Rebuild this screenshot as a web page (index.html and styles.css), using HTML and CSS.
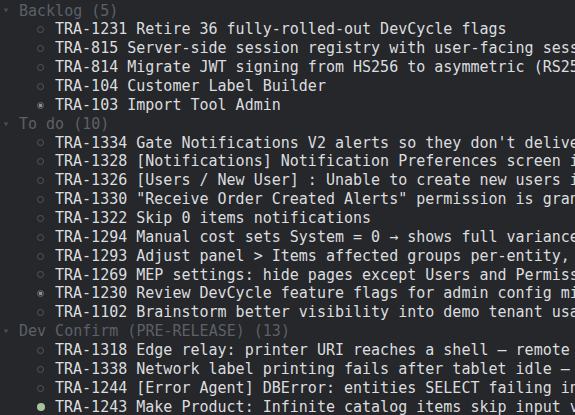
FILE: index.html
```html
<!DOCTYPE html>
<html>
<head>
<meta charset="utf-8">
<link rel="stylesheet" href="styles.css">
</head>
<body>
<div class="list">
  <div class="group">
    <div class="head"><span class="caret"><svg width="6" height="5" viewBox="0 0 6 5"><path d="M0.5 0.5h5L3 4.2z"/></svg></span><span class="label">Backlog (5)</span></div>
    <div class="item"><span class="ic"><span class="dot open"></span></span><span class="label">TRA-1231 Retire 36 fully-rolled-out DevCycle flags</span></div>
    <div class="item"><span class="ic"><span class="dot open"></span></span><span class="label">TRA-815 Server-side session registry with user-facing sess</span></div>
    <div class="item"><span class="ic"><span class="dot open"></span></span><span class="label">TRA-814 Migrate JWT signing from HS256 to asymmetric (RS25</span></div>
    <div class="item"><span class="ic"><span class="dot open"></span></span><span class="label">TRA-104 Customer Label Builder</span></div>
    <div class="item"><span class="ic"><span class="dot half"></span></span><span class="label">TRA-103 Import Tool Admin</span></div>
  </div>
  <div class="group">
    <div class="head"><span class="caret"><svg width="6" height="5" viewBox="0 0 6 5"><path d="M0.5 0.5h5L3 4.2z"/></svg></span><span class="label">To do (10)</span></div>
    <div class="item"><span class="ic"><span class="dot open"></span></span><span class="label">TRA-1334 Gate Notifications V2 alerts so they don't delive</span></div>
    <div class="item"><span class="ic"><span class="dot open"></span></span><span class="label">TRA-1328 [Notifications] Notification Preferences screen i</span></div>
    <div class="item"><span class="ic"><span class="dot open"></span></span><span class="label">TRA-1326 [Users / New User] : Unable to create new users i</span></div>
    <div class="item"><span class="ic"><span class="dot open"></span></span><span class="label">TRA-1330 "Receive Order Created Alerts" permission is gran</span></div>
    <div class="item"><span class="ic"><span class="dot open"></span></span><span class="label">TRA-1322 Skip 0 items notifications</span></div>
    <div class="item"><span class="ic"><span class="dot open"></span></span><span class="label">TRA-1294 Manual cost sets System = 0 → shows full variance</span></div>
    <div class="item"><span class="ic"><span class="dot open"></span></span><span class="label">TRA-1293 Adjust panel &gt; Items affected groups per-entity,</span></div>
    <div class="item"><span class="ic"><span class="dot open"></span></span><span class="label">TRA-1269 MEP settings: hide pages except Users and Permiss</span></div>
    <div class="item"><span class="ic"><span class="dot half"></span></span><span class="label">TRA-1230 Review DevCycle feature flags for admin config mi</span></div>
    <div class="item"><span class="ic"><span class="dot open"></span></span><span class="label">TRA-1102 Brainstorm better visibility into demo tenant usa</span></div>
  </div>
  <div class="group">
    <div class="head"><span class="caret"><svg width="6" height="5" viewBox="0 0 6 5"><path d="M0.5 0.5h5L3 4.2z"/></svg></span><span class="label">Dev Confirm (PRE-RELEASE) (13)</span></div>
    <div class="item"><span class="ic"><span class="dot open"></span></span><span class="label">TRA-1318 Edge relay: printer URI reaches a shell — remote</span></div>
    <div class="item"><span class="ic"><span class="dot open"></span></span><span class="label">TRA-1338 Network label printing fails after tablet idle —</span></div>
    <div class="item"><span class="ic"><span class="dot open"></span></span><span class="label">TRA-1244 [Error Agent] DBError: entities SELECT failing in</span></div>
    <div class="item"><span class="ic"><span class="dot done"></span></span><span class="label">TRA-1243 Make Product: Infinite catalog items skip input v</span></div>
  </div>
</div>
</body>
</html>
```

FILE: styles.css
```css
html, body {
  margin: 0;
  padding: 0;
  background: #25272b;
  overflow: hidden;
}
body {
  width: 575px;
  height: 415px;
}
.list {
  padding-top: 1.5px;
  font-family: "DejaVu Sans Mono", "Liberation Mono", monospace;
  font-size: 15px;
  line-height: 18.86px;
  color: #dcdddf;
}
.head, .item {
  display: flex;
  align-items: center;
  white-space: nowrap;
  height: 18.86px;
}
.label {
  flex-shrink: 0;
}
.head {
  color: #5d6067;
}
.caret {
  width: 19px;
  flex-shrink: 0;
  display: flex;
  padding-left: 3px;
  box-sizing: border-box;
}
.caret svg {
  fill: #4a4d53;
}
.item {
  padding-left: 37px;
}
.ic {
  width: 18px;
  flex-shrink: 0;
  display: flex;
  align-items: center;
}
.dot {
  width: 7px;
  height: 7px;
  border-radius: 50%;
  box-sizing: border-box;
}
.dot.open {
  border: 1.5px solid #53565c;
}
.dot.half {
  border: 1.5px solid #65686e;
  background: radial-gradient(circle, #8c8f94 0 1.5px, #34363a 2px);
}
.dot.done {
  background: #a6c49c;
  width: 8px;
  height: 8px;
}
```
